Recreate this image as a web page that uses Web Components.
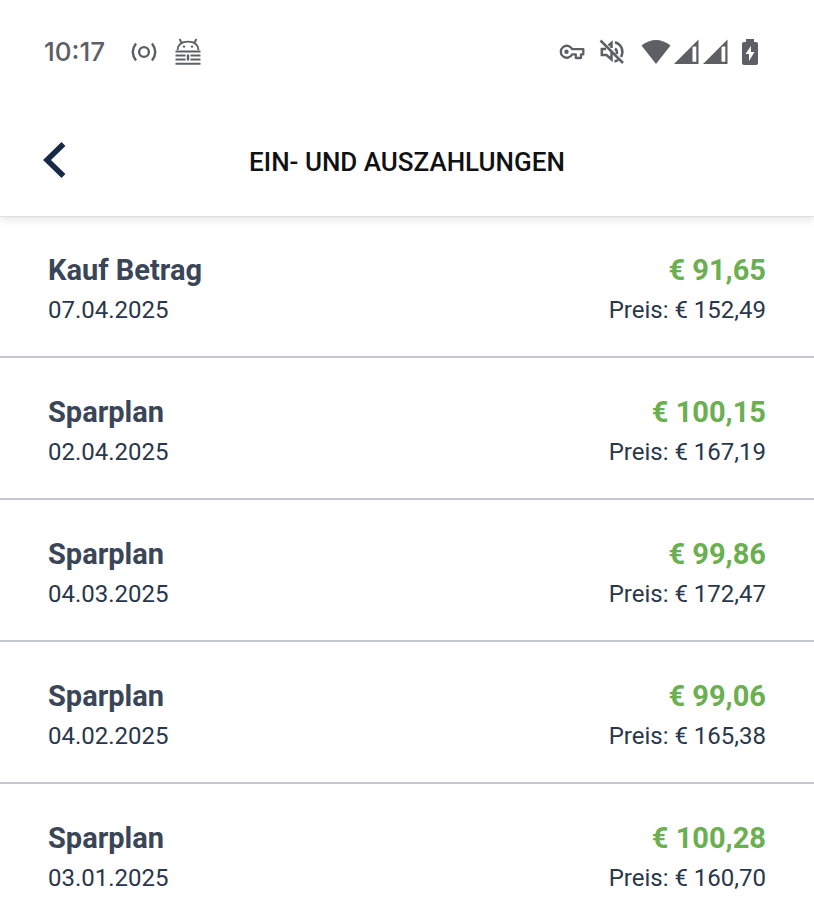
<!DOCTYPE html>
<html lang="de">
<head>
<meta charset="utf-8">
<meta name="viewport" content="width=device-width, initial-scale=1">
<title>Ein- und Auszahlungen</title>
<style>
  body { margin: 0; background: #fff; font-family: Roboto, "Liberation Sans", sans-serif; color: #29374b; height: 100vh; overflow: hidden; }
</style>
</head>
<body>
<account-screen></account-screen>

<script>
const define = (name, html, setup) => {
  const template = document.createElement('template');
  template.innerHTML = html;
  customElements.define(name, class extends HTMLElement {
    constructor() {
      super();
      this.attachShadow({ mode: 'open' }).append(template.content.cloneNode(true));
      if (setup) setup(this.shadowRoot);
    }
  });
};

define('status-bar', `
  <style>
    :host { display: flex; align-items: center; justify-content: space-between; height: 104px; padding: 0 55px 0 44px; box-sizing: border-box; color: #5c6065; }
    .group { display: flex; align-items: center; }
    time { font-family: Inter, Roboto, sans-serif; font-size: 26px; line-height: 32px; width: 87px; font-weight: 500; }
    svg { display: block; fill: none; stroke: currentColor; }
    .solid { fill: currentColor; stroke: none; }
    .cast { margin-right: 17px; }
    .key { margin-right: 14px; }
    .mute { margin-right: 16px; }
    .wifi { margin-right: 3px; }
    .signal { margin-right: 3px; }
    .last { margin-right: 12px; }
  </style>
  <div class="group">
    <time>10:17</time>
    <svg class="cast" width="26" height="22" viewBox="0 0 26 22" stroke-width="2.4" aria-hidden="true"><circle cx="13" cy="11" r="4.9"/><path d="M5 2.5Q-1.5 11 5 19.5M21 2.5Q27.500 11 21 19.500"/></svg>
    <svg width="28" height="28" viewBox="0 0 28 28" aria-hidden="true"><path stroke-width="1.900" d="M3.500 12C4 6 8.500 3.600 14 3.600S24 6 24.500 12M7.500 4.500L5.500 1M20.500 4.500L22.500 1"/><g class="solid"><circle cx="10" cy="8.600" r="1.200"/><circle cx="18" cy="8.600" r="1.200"/></g><path stroke-width="2.100" d="M1.500 13.500H26.500M1.500 17.500H11.500M16.500 17.500H26.500M1.500 21.500H11.500M16.500 21.500H26.500M1.500 25.800H26.500"/><path stroke-width="2.400" d="M14 16.500V22.500"/></svg>
  </div>
  <div class="group">
    <svg class="key" width="26" height="18" viewBox="0 0 26 18" aria-hidden="true"><path stroke-width="2.300" stroke-linejoin="round" d="M13.200 6.200H24.300V11.300H22V15H16.800V11.300H13.200A6 6 0 1 1 13.200 6.200Z"/><circle class="solid" cx="7.500" cy="8.800" r="2.200"/></svg>
    <svg class="mute" width="26" height="26" viewBox="0 0 26 26" stroke-width="2.500" aria-hidden="true"><path d="M1.500 1.500L24 24M7 10H2.800V16H7.500L12.500 20.500V13M9.500 6.500L12.500 4V9M16 9.500Q18.500 11.500 17.800 15M16 3.200C23 5.500 25 12 22 18M15.500 22.500Q17.500 22 19 21"/></svg>
    <svg class="wifi" width="30" height="26" viewBox="0 0 30 26" aria-hidden="true"><path class="solid" d="M.5 6.500Q15-4.500 29.500 6.500L15 25Z"/></svg>
    <svg class="signal" width="26" height="26" viewBox="0 0 26 26" aria-hidden="true"><path class="solid" fill-rule="evenodd" d="M0 25L24.500 .5V25ZM18.500 8.500V22.800H22.300V7.500H19.500Z"/></svg>
    <svg class="signal last" width="26" height="26" viewBox="0 0 26 26" aria-hidden="true"><path class="solid" fill-rule="evenodd" d="M0 25L24.500 .5V25ZM18.500 8.500V22.800H22.300V7.500H19.500Z"/></svg>
    <svg width="18" height="26" viewBox="0 0 18 26" aria-hidden="true"><path class="solid" fill-rule="evenodd" d="M5 0H13V3H15Q17 3 17 5V24Q17 26 15 26H3Q1 26 1 24V5Q1 3 3 3H5ZM10 7L4.500 15H8V22L13.500 13H10Z"/></svg>
  </div>`);

define('page-header', `
  <style>
    :host { display: grid; grid-template-columns: 96px 1fr 96px; align-items: center; height: 112px; box-shadow: 0 1px 0 #dfdfe0, 0 3px 9px rgba(0,0,0,.12); clip-path: inset(0 0 -14px); position: relative; background: #fff; }
    button { display: block; border: 0; margin: 0; padding: 0 0 0 42px; background: none; color: #172b46; cursor: pointer; }
    svg { display: block; fill: none; stroke: currentColor; }
    h1 { margin: 0; padding-top: 3px; font-size: 26px; line-height: 32px; font-weight: 500; text-align: center; text-transform: uppercase; color: #101113; }
  </style>
  <button type="button" aria-label="Zurück"><svg width="25" height="38" viewBox="0 0 25 38"><path stroke-width="5.500" d="M21.500 3L5 19L21.500 35"/></svg></button>
  <h1><slot></slot></h1>`);

define('booking-row', `
  <style>
    :host { display: grid; grid-template-columns: 1fr auto; row-gap: 8px; padding: 36px 48px 32px; border-bottom: 2px solid #c6c7ce; }
    .title, .amount { font-size: 29px; line-height: 36px; font-weight: 700; }
    .title { color: #3a4658; }
    .amount { color: #6aaf50; }
    .date, .price { font-size: 24px; line-height: 28px; }
    .amount, .price { text-align: right; }
  </style>
  <div class="title"><slot name="title"></slot></div>
  <div class="amount"><slot name="amount"></slot></div>
  <div class="date"><slot name="date"></slot></div>
  <div class="price">Preis: <slot name="price"></slot></div>`);

define('account-screen', `
  <style>
    :host { display: block; }
    main { display: block; }
  </style>
  <status-bar></status-bar>
  <page-header>Ein- und Auszahlungen</page-header>
  <main></main>`, root => {
  const bookings = [
    ['Kauf Betrag', '€ 91,65', '07.04.2025', '€ 152,49'],
    ['Sparplan', '€ 100,15', '02.04.2025', '€ 167,19'],
    ['Sparplan', '€ 99,86', '04.03.2025', '€ 172,47'],
    ['Sparplan', '€ 99,06', '04.02.2025', '€ 165,38'],
    ['Sparplan', '€ 100,28', '03.01.2025', '€ 160,70']
  ];
  const slots = ['title', 'amount', 'date', 'price'];
  root.querySelector('main').append(...bookings.map(values => {
    const row = document.createElement('booking-row');
    values.forEach((value, i) => {
      const part = document.createElement('span');
      part.slot = slots[i];
      part.textContent = value;
      row.append(part);
    });
    return row;
  }));
});
</script>
</body>
</html>
